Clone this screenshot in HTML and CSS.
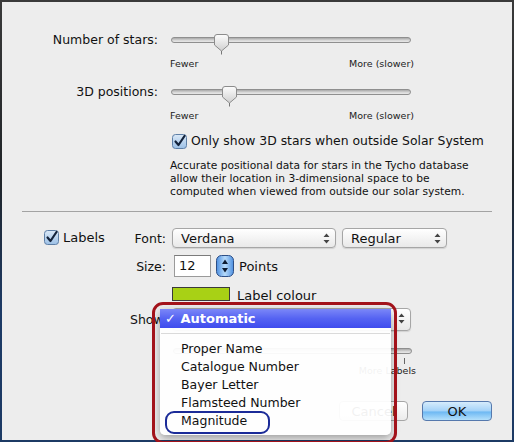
FILE: index.html
```html
<!DOCTYPE html>
<html lang="en">
<head>
    <meta charset="UTF-8">
    <title>Star Preferences</title>
    <link rel="stylesheet" href="styles.css">
</head>
<body>
    <div class="window">
        <section class="stars">
            <div class="slider-row">
                <div class="row-label">Number of stars:</div>
                <div class="slider-col">
                    <div class="slider">
                        <div class="track"></div>
                        <svg class="thumb" style="--pos: 43px" width="17" height="22" viewBox="0 0 17 22">
                            <defs>
                                <linearGradient id="thumbFill" x1="0" y1="0" x2="0" y2="1">
                                    <stop offset="0" stop-color="#fdfdfd"/>
                                    <stop offset="1" stop-color="#cfcfcf"/>
                                </linearGradient>
                            </defs>
                            <path d="M1.5 4 Q1.5 1.5 4 1.5 H13 Q15.5 1.5 15.5 4 V12 L8.5 18 L1.5 12 Z" fill="url(#thumbFill)" stroke="#8c8c8c"/>
                            <line x1="8.5" y1="18" x2="8.5" y2="21.5" stroke="#777"/>
                        </svg>
                    </div>
                    <div class="slider-ends"><span>Fewer</span><span>More (slower)</span></div>
                </div>
            </div>

            <div class="slider-row">
                <div class="row-label">3D positions:</div>
                <div class="slider-col">
                    <div class="slider">
                        <div class="track"></div>
                        <svg class="thumb" style="--pos: 51px" width="17" height="22" viewBox="0 0 17 22">
                            <path d="M1.5 4 Q1.5 1.5 4 1.5 H13 Q15.5 1.5 15.5 4 V12 L8.5 18 L1.5 12 Z" fill="url(#thumbFill)" stroke="#8c8c8c"/>
                            <line x1="8.5" y1="18" x2="8.5" y2="21.5" stroke="#777"/>
                        </svg>
                    </div>
                    <div class="slider-ends"><span>Fewer</span><span>More (slower)</span></div>
                </div>
            </div>

            <label class="check check-3d">
                <svg class="checkbox" width="15" height="15" viewBox="0 0 15 15">
                    <defs>
                        <linearGradient id="boxFill" x1="0" y1="0" x2="0" y2="1">
                            <stop offset="0" stop-color="#dbe9f7"/>
                            <stop offset="1" stop-color="#9cc0e6"/>
                        </linearGradient>
                    </defs>
                    <rect x="0.5" y="0.5" width="14" height="14" rx="3" fill="url(#boxFill)" stroke="#5e7fa6"/>
                    <path d="M3.5 7.5 L6.5 11 L12.5 2" fill="none" stroke="#14233b" stroke-width="2.2" stroke-linecap="round" stroke-linejoin="round"/>
                </svg>
                <span>Only show 3D stars when outside Solar System</span>
            </label>

            <p class="note">Accurate positional data for stars in the Tycho database<br>allow their location in 3-dimensional space to be<br>computed when viewed from outside our solar system.</p>
        </section>

        <hr class="divider">

        <section class="labels">
            <label class="check labels-toggle">
                <svg class="checkbox" width="15" height="15" viewBox="0 0 15 15">
                    <rect x="0.5" y="0.5" width="14" height="14" rx="3" fill="url(#boxFill)" stroke="#5e7fa6"/>
                    <path d="M3.5 7.5 L6.5 11 L12.5 2" fill="none" stroke="#14233b" stroke-width="2.2" stroke-linecap="round" stroke-linejoin="round"/>
                </svg>
                <span>Labels</span>
            </label>

            <div class="label-grid">
                <div class="field-label">Font:</div>
                <div class="field font-field">
                    <div class="popup popup-font">Verdana
                        <svg class="arrows" width="7" height="11" viewBox="0 0 7 11"><path d="M3.5 0.5 L6.5 4 H0.5 Z M3.5 10.5 L6.5 7 H0.5 Z" fill="#444"/></svg>
                    </div>
                    <div class="popup popup-style">Regular
                        <svg class="arrows" width="7" height="11" viewBox="0 0 7 11"><path d="M3.5 0.5 L6.5 4 H0.5 Z M3.5 10.5 L6.5 7 H0.5 Z" fill="#444"/></svg>
                    </div>
                </div>

                <div class="field-label size-label">Size:</div>
                <div class="field size-field">
                    <div class="size-input">12</div>
                    <svg class="stepper" width="18" height="22" viewBox="0 0 18 22">
                        <defs>
                            <linearGradient id="stepFill" x1="0" y1="0" x2="1" y2="0">
                                <stop offset="0" stop-color="#4d8fe0"/>
                                <stop offset="0.5" stop-color="#b7dbfa"/>
                                <stop offset="1" stop-color="#4d8fe0"/>
                            </linearGradient>
                        </defs>
                        <rect x="0.5" y="0.5" width="17" height="21" rx="5" fill="url(#stepFill)" stroke="#2d4f86"/>
                        <path d="M9 4.5 L12 9 H6 Z M9 17.5 L12 13 H6 Z" fill="#0d1c33"/>
                    </svg>
                    <span>Points</span>
                </div>

                <div class="field-label"></div>
                <div class="field colour-field">
                    <div class="swatch"></div>
                    <span>Label colour</span>
                </div>

                <div class="field-label show-label">Show:</div>
                <div class="field show-field">
                    <div class="popup popup-show">
                        <svg class="arrows" width="7" height="11" viewBox="0 0 7 11"><path d="M3.5 0.5 L6.5 4 H0.5 Z M3.5 10.5 L6.5 7 H0.5 Z" fill="#444"/></svg>
                    </div>
                    <ul class="menu">
                        <li class="menu-item selected">✓ Automatic</li>
                        <li class="menu-sep"></li>
                        <li class="menu-item">Proper Name</li>
                        <li class="menu-item">Catalogue Number</li>
                        <li class="menu-item">Bayer Letter</li>
                        <li class="menu-item">Flamsteed Number</li>
                        <li class="menu-item">Magnitude</li>
                    </ul>
                </div>

                <div class="field-label"></div>
                <div class="field density-field">
                    <div class="track"></div>
                    <div class="tick"></div>
                    <div class="slider-ends"><span></span><span>More Labels</span></div>
                </div>
            </div>
        </section>

        <div class="buttons">
            <div class="button cancel">Cancel</div>
            <div class="button ok">OK</div>
        </div>

        <!-- callouts drawn over the open menu -->
        <div class="callout callout-menu"></div>
        <div class="callout callout-item"></div>
    </div>
</body>
</html>
```

FILE: styles.css
```css
* {
    margin: 0;
    padding: 0;
    box-sizing: border-box;
}

body {
    width: 514px;
    height: 442px;
    overflow: hidden;
    background: linear-gradient(180deg, #3a3a3a 0%, #202428 40%, #1d3b66 70%, #1c3a64 100%);
    font-family: "DejaVu Sans", Verdana, sans-serif;
    color: #111;
}

.window {
    position: relative;
    margin: 2px 2px 0 2px;
    height: 438px;
    background: #ededed;
    display: flex;
    flex-direction: column;
}

/* ---- star sliders ---- */

.stars {
    padding-top: 30px;
    display: flex;
    flex-direction: column;
}

.slider-row {
    display: flex;
    align-items: flex-start;
    margin-bottom: 14px;
}

.slider-row + .slider-row {
    margin-bottom: 11px;
}

.row-label {
    width: 156px;
    text-align: right;
    font-size: 12.5px;
    line-height: 16px;
}

.slider-col {
    margin-left: 12px;
    width: 246px;
}

.slider {
    position: relative;
    height: 16px;
    display: flex;
    align-items: center;
}

.track {
    margin-left: 1px;
    width: 240px;
    height: 6px;
    border-radius: 3px;
    border: 1px solid #8f8f8f;
    background: linear-gradient(180deg, #a9a9a9 0%, #d8d8d8 60%, #e8e8e8 100%);
}

.thumb {
    position: absolute;
    left: var(--pos);
    top: 1px;
}

.slider-ends {
    display: flex;
    justify-content: space-between;
    width: 244px;
    margin-top: 10px;
    font-size: 9.5px;
    line-height: 12px;
    color: #222;
}

.check {
    display: flex;
    align-items: center;
    gap: 4px;
}

.check-3d {
    margin-left: 170px;
    font-size: 12.4px;
    line-height: 16px;
}

.note {
    margin: 10px 0 0 168px;
    font-size: 10.7px;
    line-height: 13px;
    color: #111;
}

.divider {
    margin: 13px 20px 0 20px;
    border: none;
    border-top: 1px solid #a3a3a3;
}

/* ---- label options ---- */

.labels {
    display: flex;
    padding: 16px 0 0 42px;
}

.labels-toggle {
    width: 86px;
    height: 18px;
    font-size: 13px;
    align-self: flex-start;
}

.label-grid {
    display: grid;
    grid-template-columns: 36px 1fr;
    column-gap: 6px;
    row-gap: 7px;
    align-items: center;
}

.field-label {
    text-align: right;
    font-size: 12.5px;
}

.field {
    display: flex;
    align-items: center;
    font-size: 13px;
}

.popup {
    position: relative;
    height: 20px;
    padding-left: 8px;
    display: flex;
    align-items: center;
    border: 1px solid #a6a6a6;
    border-radius: 4px;
    background: linear-gradient(180deg, #ffffff 0%, #f4f4f4 50%, #e9e9e9 100%);
    box-shadow: 0 1px 1px rgba(0, 0, 0, 0.12);
    font-size: 13px;
}

.arrows {
    position: absolute;
    right: 5px;
    top: 4px;
}

.popup-font {
    width: 164px;
}

.popup-style {
    width: 105px;
    margin-left: 6px;
}

.size-field {
    height: 22px;
}

.size-input {
    width: 37px;
    height: 22px;
    margin-left: 2px;
    padding: 2px 0 0 4px;
    background: #fff;
    border: 1px solid #9a9a9a;
    border-top-color: #7b7b7b;
    font-size: 13px;
}

.stepper {
    margin-left: 5px;
}

.size-field span {
    margin-left: 5px;
}

.colour-field {
    margin-top: 3px;
    height: 14px;
}

.swatch {
    width: 58px;
    height: 14px;
    background: #a8d115;
    border: 1px solid #3a3a3a;
}

.colour-field span {
    margin-left: 7px;
    margin-top: 2px;
}

.show-field {
    position: relative;
}

.popup-show {
    width: 239px;
    height: 23px;
}

.menu {
    position: absolute;
    left: -12px;
    top: 1px;
    width: 231px;
    height: 126px;
    list-style: none;
    background: rgba(255, 255, 255, 0.94);
    border-radius: 0 0 5px 5px;
    box-shadow: 0 3px 8px rgba(0, 0, 0, 0.35);
    font-size: 12.5px;
    z-index: 2;
}

.menu-item {
    height: 18px;
    line-height: 18px;
    padding-left: 21px;
    color: #111;
}

.menu-item.selected {
    height: 19px;
    line-height: 19px;
    padding-left: 5px;
    color: #fff;
    font-weight: bold;
    font-size: 13px;
    background: linear-gradient(180deg, #7b87f8 0%, #5563f2 50%, #3f4cee 100%);
}

.menu-sep {
    height: 1px;
    margin: 5px 1px 6px 1px;
    background: #dadada;
}

.density-field {
    position: relative;
    flex-direction: column;
    align-items: flex-start;
    margin-top: 10px;
}

.density-field .track {
    width: 239px;
}

.tick {
    width: 1px;
    height: 6px;
    margin: 4px 0 0 232px;
    background: #666;
}

.density-field .slider-ends {
    width: 244px;
    margin-top: 1px;
}

/* ---- dialog buttons ---- */

.buttons {
    display: flex;
    justify-content: flex-end;
    gap: 14px;
    padding: 24px 20px 0 0;
}

.button {
    height: 20px;
    border-radius: 4px;
    font-size: 13px;
    display: flex;
    align-items: center;
    justify-content: center;
}

.cancel {
    width: 69px;
    border: 1px solid #a6a6a6;
    background: linear-gradient(180deg, #ffffff 0%, #ececec 100%);
}

.ok {
    width: 70px;
    border: 1px solid #5679ad;
    background: linear-gradient(180deg, #d6ecfc 0%, #a3d2f8 50%, #6db8f3 55%, #b4e0fb 100%);
}

.callout {
    position: absolute;
    z-index: 3;
    pointer-events: none;
}

.callout-menu {
    left: 150px;
    top: 300px;
    width: 245px;
    height: 142px;
    border: 3px solid #a2121a;
    border-radius: 11px;
}

.callout-item {
    left: 163px;
    top: 409px;
    width: 105px;
    height: 23px;
    border: 2.5px solid #1b2b98;
    border-radius: 9px;
}
```
